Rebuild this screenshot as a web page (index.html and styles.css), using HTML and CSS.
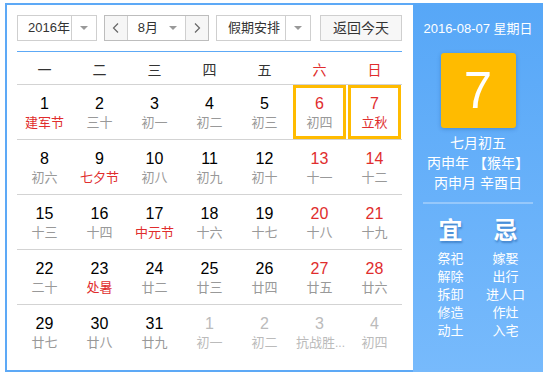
FILE: index.html
```html
<!DOCTYPE html>
<html lang="zh-CN">
<head>
<meta charset="utf-8">
<title>万年历</title>
<link rel="stylesheet" href="styles.css">
</head>
<body>
<div class="cal">
  <div class="main">
    <div class="toolbar">
      <div class="select year"><span class="sel-text">2016年</span><span class="sel-arrow"><i class="tri"></i></span></div>
      <div class="month-group">
        <span class="nav-btn"><svg width="7" height="10" viewBox="0 0 7 10"><polyline points="6,0.5 1.5,5 6,9.5" fill="none" stroke="#666" stroke-width="1.2"/></svg></span>
        <span class="month-sel"><span class="sel-text">8月</span><i class="tri"></i></span>
        <span class="nav-btn"><svg width="7" height="10" viewBox="0 0 7 10"><polyline points="1,0.5 5.5,5 1,9.5" fill="none" stroke="#666" stroke-width="1.2"/></svg></span>
      </div>
      <div class="select holiday"><span class="sel-text">假期安排</span><span class="sel-arrow"><i class="tri"></i></span></div>
      <div class="today-btn">返回今天</div>
    </div>
    <div class="weekdays">
      <span>一</span><span>二</span><span>三</span><span>四</span><span>五</span><span class="red">六</span><span class="red">日</span>
    </div>
    <div class="week">
      <div class="cell"><div class="day"><b>1</b><em class="fest">建军节</em></div></div>
      <div class="cell"><div class="day"><b>2</b><em>三十</em></div></div>
      <div class="cell"><div class="day"><b>3</b><em>初一</em></div></div>
      <div class="cell"><div class="day"><b>4</b><em>初二</em></div></div>
      <div class="cell"><div class="day"><b>5</b><em>初三</em></div></div>
      <div class="cell"><div class="day weekend hover"><b>6</b><em>初四</em></div></div>
      <div class="cell"><div class="day weekend today"><b>7</b><em class="fest">立秋</em></div></div>
    </div>
    <div class="week">
      <div class="cell"><div class="day"><b>8</b><em>初六</em></div></div>
      <div class="cell"><div class="day"><b>9</b><em class="fest">七夕节</em></div></div>
      <div class="cell"><div class="day"><b>10</b><em>初八</em></div></div>
      <div class="cell"><div class="day"><b>11</b><em>初九</em></div></div>
      <div class="cell"><div class="day"><b>12</b><em>初十</em></div></div>
      <div class="cell"><div class="day weekend"><b>13</b><em>十一</em></div></div>
      <div class="cell"><div class="day weekend"><b>14</b><em>十二</em></div></div>
    </div>
    <div class="week">
      <div class="cell"><div class="day"><b>15</b><em>十三</em></div></div>
      <div class="cell"><div class="day"><b>16</b><em>十四</em></div></div>
      <div class="cell"><div class="day"><b>17</b><em class="fest">中元节</em></div></div>
      <div class="cell"><div class="day"><b>18</b><em>十六</em></div></div>
      <div class="cell"><div class="day"><b>19</b><em>十七</em></div></div>
      <div class="cell"><div class="day weekend"><b>20</b><em>十八</em></div></div>
      <div class="cell"><div class="day weekend"><b>21</b><em>十九</em></div></div>
    </div>
    <div class="week">
      <div class="cell"><div class="day"><b>22</b><em>二十</em></div></div>
      <div class="cell"><div class="day"><b>23</b><em class="fest">处暑</em></div></div>
      <div class="cell"><div class="day"><b>24</b><em>廿二</em></div></div>
      <div class="cell"><div class="day"><b>25</b><em>廿三</em></div></div>
      <div class="cell"><div class="day"><b>26</b><em>廿四</em></div></div>
      <div class="cell"><div class="day weekend"><b>27</b><em>廿五</em></div></div>
      <div class="cell"><div class="day weekend"><b>28</b><em>廿六</em></div></div>
    </div>
    <div class="week last">
      <div class="cell"><div class="day"><b>29</b><em>廿七</em></div></div>
      <div class="cell"><div class="day"><b>30</b><em>廿八</em></div></div>
      <div class="cell"><div class="day"><b>31</b><em>廿九</em></div></div>
      <div class="cell"><div class="day other"><b>1</b><em>初一</em></div></div>
      <div class="cell"><div class="day other"><b>2</b><em>初二</em></div></div>
      <div class="cell"><div class="day other"><b>3</b><em>抗战胜<span class="dots">...</span></em></div></div>
      <div class="cell"><div class="day other"><b>4</b><em>初四</em></div></div>
    </div>
  </div>
  <div class="side">
    <div class="side-date">2016-08-07 星期日</div>
    <div class="big-day">7</div>
    <div class="lunar">
      <div>七月初五</div>
      <div>丙申年 【猴年】</div>
      <div>丙申月 辛酉日</div>
    </div>
    <div class="divider"></div>
    <div class="yiji">
      <div class="col">
        <div class="yj-title">宜</div>
        <div>祭祀</div><div>解除</div><div>拆卸</div><div>修造</div><div>动土</div>
      </div>
      <div class="col">
        <div class="yj-title">忌</div>
        <div>嫁娶</div><div>出行</div><div>进人口</div><div>作灶</div><div>入宅</div>
      </div>
    </div>
  </div>
</div>
</body>
</html>
```

FILE: styles.css
```css
* { box-sizing: border-box; }
html, body { margin: 0; padding: 0; background: #fff; }
body {
  font-family: "Liberation Sans", Arial, "Noto Sans CJK SC", sans-serif;
  color: #333;
}
.cal {
  display: flex;
  width: 538px;
  height: 369px;
  margin: 3px 0 0 5px;
}
.main {
  width: 408px;
  border: 2px solid #5da9f6;
  border-right: none;
  padding: 10px 11px 0 10px;
}
.toolbar {
  display: flex;
  height: 26px;
  gap: 7px;
  margin-bottom: 10px;
  font-size: 13px;
}
.select {
  display: flex;
  border: 1px solid #cfcfcf;
  background: #fff;
}
.sel-text { line-height: 24px; padding-left: 10px; flex: 1; }
.year { width: 80px; }
.holiday { width: 95px; }
.holiday .sel-text { padding-left: 11px; }
.sel-arrow {
  width: 25px;
  border-left: 1px solid #cfcfcf;
  display: flex;
  align-items: center;
  justify-content: center;
}
.tri {
  display: block;
  width: 0;
  height: 0;
  border-left: 4px solid transparent;
  border-right: 4px solid transparent;
  border-top: 4px solid #999;
}
.month-group {
  display: flex;
  width: 105px;
  border: 1px solid #bdbdbd;
}
.nav-btn {
  width: 22px;
  background: #f6f6f6;
  display: flex;
  align-items: center;
  justify-content: center;
}
.month-sel {
  width: 60px;
  border-left: 1px solid #cfcfcf;
  border-right: 1px solid #cfcfcf;
  display: flex;
  align-items: center;
  padding-right: 8px;
}
.today-btn {
  margin-left: auto;
  width: 82px;
  border: 1px solid #cfcfcf;
  background: #f7f7f7;
  text-align: center;
  line-height: 24px;
  font-size: 14px;
}
.weekdays {
  display: grid;
  grid-template-columns: repeat(7, 55px);
  border-top: 1px solid #5da9f6;
  border-bottom: 1px solid #d3d3d3;
  height: 34px;
  padding-top: 3px;
  font-size: 14px;
  line-height: 30px;
  text-align: center;
  color: #333;
}
.weekdays .red { color: #e02d2d; }
.week {
  display: grid;
  grid-template-columns: repeat(7, 55px);
  border-bottom: 1px solid #d3d3d3;
}
.week.last { border-bottom: none; }
.day {
  height: 54px;
  margin: 0 1px;
  border: 3px solid transparent;
  padding-top: 6px;
  text-align: center;
}
.day b {
  display: block;
  font-weight: normal;
  font-size: 16px;
  line-height: 20px;
  color: #000;
}
.day em {
  display: block;
  font-style: normal;
  font-size: 13px;
  line-height: 18px;
  color: #999;
  white-space: nowrap;
}
.day em.fest { color: #e02d2d; }
.day.weekend b { color: #e02d2d; }
.day.other b, .day.other em { color: #bbb; }
.dots { font-size: 12px; }
.day.hover, .day.today { border-color: #ffbb00; }
.side {
  width: 130px;
  background: linear-gradient(#57a7f7, #77bafc);
  color: #fff;
  text-align: center;
  padding-top: 16px;
}
.side-date {
  font-size: 13px;
  line-height: 20px;
}
.big-day {
  width: 75px;
  height: 75px;
  margin: 14px auto 0;
  background: #ffbb00;
  border-radius: 3px;
  box-shadow: 0 1px 4px rgba(0, 60, 130, 0.3);
  font-size: 51px;
  line-height: 75px;
  color: #fff;
}
.lunar {
  margin-top: 5px;
  font-size: 14px;
  line-height: 20px;
}
.divider {
  width: 110px;
  height: 2px;
  margin: 9px auto 0;
  background: #96c8fb;
}
.yiji {
  display: flex;
  justify-content: center;
  margin-top: 12px;
  font-size: 13px;
  line-height: 18px;
}
.col { width: 55px; }
.yj-title {
  font-size: 24px;
  font-weight: bold;
  line-height: 30px;
  margin-bottom: 4px;
  text-shadow: 1px 2px 2px rgba(20, 80, 150, 0.45);
}
```
